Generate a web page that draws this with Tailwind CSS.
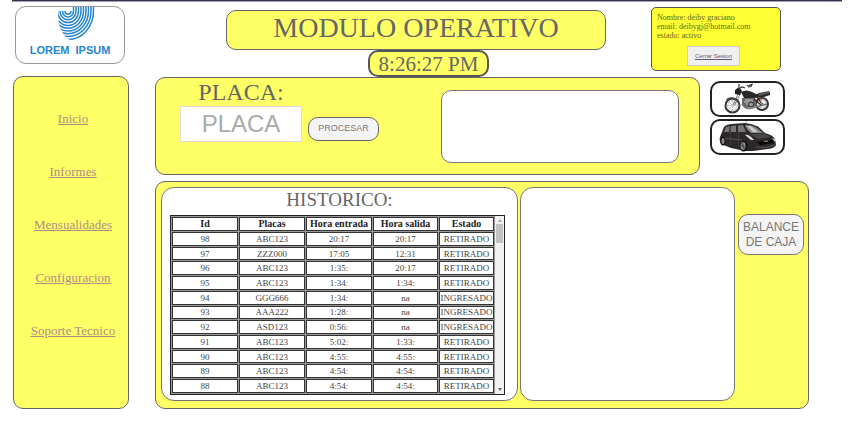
<!DOCTYPE html>
<html lang="es">
<head>
<meta charset="utf-8">
<title>Modulo Operativo</title>
<script src="https://cdn.jsdelivr.net/npm/@tailwindcss/browser@4"></script>
</head>
<body class="bg-white pl-3 pr-[14px] font-['Liberation_Serif',serif] text-[#666]">
<div class="h-[2px] border-t border-[#33334d] bg-[#a0a0b0]"></div>
<div class="flex gap-[26px] pl-px pt-1">

  <aside class="w-[116px] shrink-0 flex flex-col gap-3">
    <div class="ml-[2px] mr-1 h-[58px] rounded-[11px] border border-[#999] overflow-hidden flex flex-col items-center">
      <svg class="ml-[14px] w-[38px] h-[36px] shrink-0" viewBox="0 0 38 36" fill="none" stroke="#2585cf" stroke-width="1.500" aria-hidden="true">
        <defs><clipPath id="print"><path d="M0 4H8L12 0H38V20Q32 33 19 36L8 31L3 23Q0 17 0 4Z"/></clipPath></defs>
        <g clip-path="url(#print)">
          <path d="M7 4A3 3.300 0 0 0 13 4"/>
          <path d="M4.500 4A5.500 6 0 0 0 15.500 4V0"/>
          <path d="M2 4A8 8.800 0 0 0 18 4V0"/>
          <path d="M-.5 4A10.500 11.600 0 0 0 20.500 4V0"/>
          <path d="M-3 4A13 14.400 0 0 0 23 4V0"/>
          <path d="M-5.500 4A15.500 17.200 0 0 0 25.500 4V0"/>
          <path d="M-8 4A18 20 0 0 0 28 4V0"/>
          <path d="M-10.500 4A20.500 22.800 0 0 0 30.500 4V0"/>
          <path d="M-13 4A23 25.600 0 0 0 33 4V0"/>
          <path d="M-15.500 4A25.500 28.600 0 0 0 35.500 4V0"/>
        </g>
      </svg>
      <span class="font-['Liberation_Sans',sans-serif] font-bold text-[11px] leading-[14px] text-[#2585cf] whitespace-pre">LOREM  IPSUM</span>
    </div>
    <nav class="h-[333px] rounded-[10px] border border-[#666] bg-[#ffff66] pt-8 pl-1 flex flex-col items-center gap-[33px] text-[13px] leading-5 text-[#b08c84] underline">
      <a href="#">Inicio</a>
      <a href="#">Informes</a>
      <a href="#">Mensualidades</a>
      <a href="#">Configuracion</a>
      <a href="#">Soporte Tecnico</a>
    </nav>
  </aside>

  <div class="grow min-w-0 flex flex-col">
    <header class="h-[71px] flex items-start gap-[45px] pl-[71px] pr-[61px]">
      <div class="grow pt-1 flex flex-col">
        <h1 class="h-10 rounded-[10px] border border-[#666] bg-[#ffff66] text-[28px] leading-[33px] text-center">MODULO OPERATIVO</h1>
        <div class="pl-[25px] flex justify-center">
          <time class="h-[27px] w-[121px] rounded-[10px] border-2 border-[#555] bg-[#ffff66] text-[21px] leading-6 text-center">8:26:27 PM</time>
        </div>
      </div>
      <section class="mt-px w-[130px] h-[64px] shrink-0 rounded-[5px] border border-[#555] bg-[#ffff33] px-[5px] pt-[5px] text-[8px] leading-[9px] text-[#66661a] flex flex-col" aria-label="Usuario">
        <p>Nombre: deiby graciano</p>
        <p>email: deibygj@hotmail.com</p>
        <p>estado: activo</p>
        <button class="mt-[6px] mr-[5px] self-center w-[53px] h-5 border border-[#ccc] bg-[#f0f0f0] font-['Liberation_Sans',sans-serif] text-[6px] underline text-[#665577]">Cerrar Sesion</button>
      </section>
    </header>

    <div class="flex gap-[10px] pr-[57px]">
      <form class="grow h-[98px] rounded-[10px] border border-[#666] bg-[#ffff66] pl-6 pr-5 flex" onsubmit="return false">
        <div class="w-[122px] flex flex-col items-center">
          <label for="placa" class="text-[24px] leading-7">PLACA:</label>
          <input id="placa" placeholder="PLACA" class="w-full h-9 border border-[#ddd] bg-white text-center font-['Liberation_Sans',sans-serif] text-[24px] placeholder:text-[#aaa]">
        </div>
        <button class="mt-[39px] ml-[6px] w-[71px] h-6 rounded-[10px] border border-[#666] bg-[#f4f4f4] font-['Liberation_Sans',sans-serif] text-[9px] text-[#777]">PROCESAR</button>
        <output class="ml-[62px] mt-3 grow h-[73px] rounded-[10px] border border-[#777] bg-white"></output>
      </form>
      <div class="w-[75px] mt-1 flex flex-col gap-[2px]">
        <button class="h-9 rounded-[10px] border-2 border-[#222] bg-white flex justify-center items-center" aria-label="Moto">
          <svg class="w-[50px] h-[32px]" viewBox="0 0 50 32" fill="none">
            <circle cx="9.500" cy="22.500" r="7" stroke="#333" stroke-width="2"/><circle cx="9.500" cy="22.500" r="4.800" stroke="#aaa" stroke-width=".6"/>
            <circle cx="39" cy="21" r="6" stroke="#333" stroke-width="2"/><circle cx="39" cy="21" r="4" stroke="#aaa" stroke-width=".7"/>
            <path d="M9.500 15.500V29.500M2.500 22.500H16.500M4.500 17.500L14.500 27.500M4.500 27.500L14.500 17.500" stroke="#aaa" stroke-width=".5"/>
            <path d="M10 22L16 9M11.500 22.500L17.500 10" stroke="#777" stroke-width="1"/>
            <path d="M3 16Q9 12 16 17L14 18Q9 15 4 17Z" fill="#444"/>
            <path d="M12 7L16 4L19 8L17 12L12 11Z" fill="#222"/>
            <path d="M15 6L19 4L22 5M24 3L29 1.500L28 3.500L25 4M16 4V1" stroke="#333" stroke-width="1.200"/>
            <path d="M18 9Q23 6 29 9L33 11L47 9V12L41 14L31 15L21 15Z" fill="#292929"/>
            <path d="M35 10L46 8L47 10L36 13Z" fill="#555"/>
            <path d="M19 15H32L34 23L23 25L19 21Z" fill="#666"/>
            <path d="M22 17H30M21 19H30M23 21H31" stroke="#ccc" stroke-width="1"/>
            <circle cx="28" cy="21.500" r="2.500" fill="#999" stroke="#222"/>
            <path d="M19 21Q22 27 29 25L44 21" stroke="#777" stroke-width="1.600"/>
            <path d="M34 14L39 21M31 16L38 22" stroke="#222" stroke-width="1.200"/>
            <path d="M37 16L39 15L38 19Z" fill="#c66030"/><circle cx="39" cy="21" r="1.500" fill="#777"/>
          </svg>
        </button>
        <button class="h-9 rounded-[10px] border-2 border-[#222] bg-white flex justify-center items-center" aria-label="Carro">
          <svg class="w-[60px] h-[32px]" viewBox="0 0 60 32" fill="none">
            <path d="M2 16L6 6Q8 3.500 13 3L27 2Q34 2.500 40 5.500L47 12Q55 14 57 18L58 24Q57 27 50 28L35 30L27 30L13 27L3 23Q1 20 2 16Z" fill="#2c2829"/>
            <path d="M6 11L8 6L12 5L11 11ZM13 5L18 4.500V11H12.500ZM20 4.500L25 4L28 11H20Z" fill="#777"/>
            <path d="M28 4Q35 4 39 7L45 12L33 12Q29 9 27 5Z" fill="#888"/><path d="M33 5L40 11H35L29 5Z" fill="#ccc"/>
            <path d="M32 13L46 12.500L53 16L40 18Z" fill="#4a4647"/>
            <path d="M27 14Q31 13 36 19L33 19Z" fill="#ddd"/><path d="M54 17L57 18L57 21Z" fill="#ccc"/>
            <path d="M39 21L54 19L56 22L42 24Z" fill="#050505"/><path d="M46 20.500L50 20" stroke="#b89c50" stroke-width="1.200"/>
            <path d="M4 17L24 19M38 26Q47 28 57 24" stroke="#777" stroke-width=".6"/><path d="M12 11L13 24M20 12L21 26" stroke="#555" stroke-width=".5"/>
            <ellipse cx="5" cy="20" rx="2.500" ry="4.500" fill="#111"/><ellipse cx="5" cy="20" rx="1.500" ry="3" fill="#888"/>
            <ellipse cx="25.500" cy="25" rx="4" ry="5.500" fill="#111"/><ellipse cx="25" cy="25" rx="2.500" ry="4" fill="#999"/><path d="M25 21V29M22.500 25H27.500M23 22L27 28" stroke="#333" stroke-width=".7"/>
            <path d="M28 2V0" stroke="#666" stroke-width=".6"/>
          </svg>
        </button>
      </div>
    </div>

    <main class="mt-[6px] mr-[33px] h-[228px] rounded-[10px] border border-[#666] bg-[#ffff66] pl-[5px] pr-1 pt-[5px] pb-[7px] flex gap-[2px]">
      <section class="w-[357px] shrink-0 rounded-[13px] border border-[#777] bg-white flex flex-col px-2">
        <h2 class="h-[27px] text-[19px] leading-6 text-center">HISTORICO:</h2>
        <div class="mr-1 h-[180px] border border-[#222] flex overflow-hidden">
          <table class="grow h-full table-fixed border-separate border-spacing-px bg-[#999] text-[9px] leading-[10px] text-center text-[#444] [&_td]:border [&_td]:border-[#333] [&_td]:bg-white [&_td]:p-0 [&_th]:border [&_th]:border-[#333] [&_th]:bg-white [&_th]:p-0">
            <thead class="text-[10px] leading-3 text-[#222]"><tr><th class="w-[66px]">Id</th><th class="w-[66px]">Placas</th><th class="w-[66px]">Hora entrada</th><th class="w-[65px]">Hora salida</th><th>Estado</th></tr></thead>
            <tbody>
              <tr><td>98</td><td>ABC123</td><td>20:17</td><td>20:17</td><td>RETIRADO</td></tr>
              <tr><td>97</td><td>ZZZ000</td><td>17:05</td><td>12:31</td><td>RETIRADO</td></tr>
              <tr><td>96</td><td>ABC123</td><td>1:35:</td><td>20:17</td><td>RETIRADO</td></tr>
              <tr><td>95</td><td>ABC123</td><td>1:34:</td><td>1:34:</td><td>RETIRADO</td></tr>
              <tr><td>94</td><td>GGG666</td><td>1:34:</td><td>na</td><td>INGRESADO</td></tr>
              <tr><td>93</td><td>AAA222</td><td>1:28:</td><td>na</td><td>INGRESADO</td></tr>
              <tr><td>92</td><td>ASD123</td><td>0:56:</td><td>na</td><td>INGRESADO</td></tr>
              <tr><td>91</td><td>ABC123</td><td>5:02:</td><td>1:33:</td><td>RETIRADO</td></tr>
              <tr><td>90</td><td>ABC123</td><td>4:55:</td><td>4:55:</td><td>RETIRADO</td></tr>
              <tr><td>89</td><td>ABC123</td><td>4:54:</td><td>4:54:</td><td>RETIRADO</td></tr>
              <tr><td>88</td><td>ABC123</td><td>4:54:</td><td>4:54:</td><td>RETIRADO</td></tr>
            </tbody>
          </table>
          <div class="w-[9px] shrink-0 bg-[#f1f1f1] flex flex-col items-center py-[3px]" aria-hidden="true">
            <svg class="w-1 h-[3px]" viewBox="0 0 4 3"><path d="M0 3L2 0L4 3Z" fill="#aaa"/></svg>
            <div class="mt-[2px] w-[7px] h-[19px] bg-[#c1c1c1]"></div>
            <svg class="mt-auto w-1 h-[3px]" viewBox="0 0 4 3"><path d="M0 0L2 3L4 0Z" fill="#666"/></svg>
          </div>
        </div>
      </section>
      <section class="grow rounded-[13px] border border-[#777] bg-white" aria-label="Detalle"></section>
      <button class="ml-px mt-[27px] w-[66px] h-[41px] shrink-0 rounded-[10px] border border-[#777] bg-[#f4f4f4] font-['Liberation_Sans',sans-serif] text-[12px] leading-[15px] text-[#777]">BALANCE DE CAJA</button>
    </main>
  </div>
</div>
</body>
</html>
